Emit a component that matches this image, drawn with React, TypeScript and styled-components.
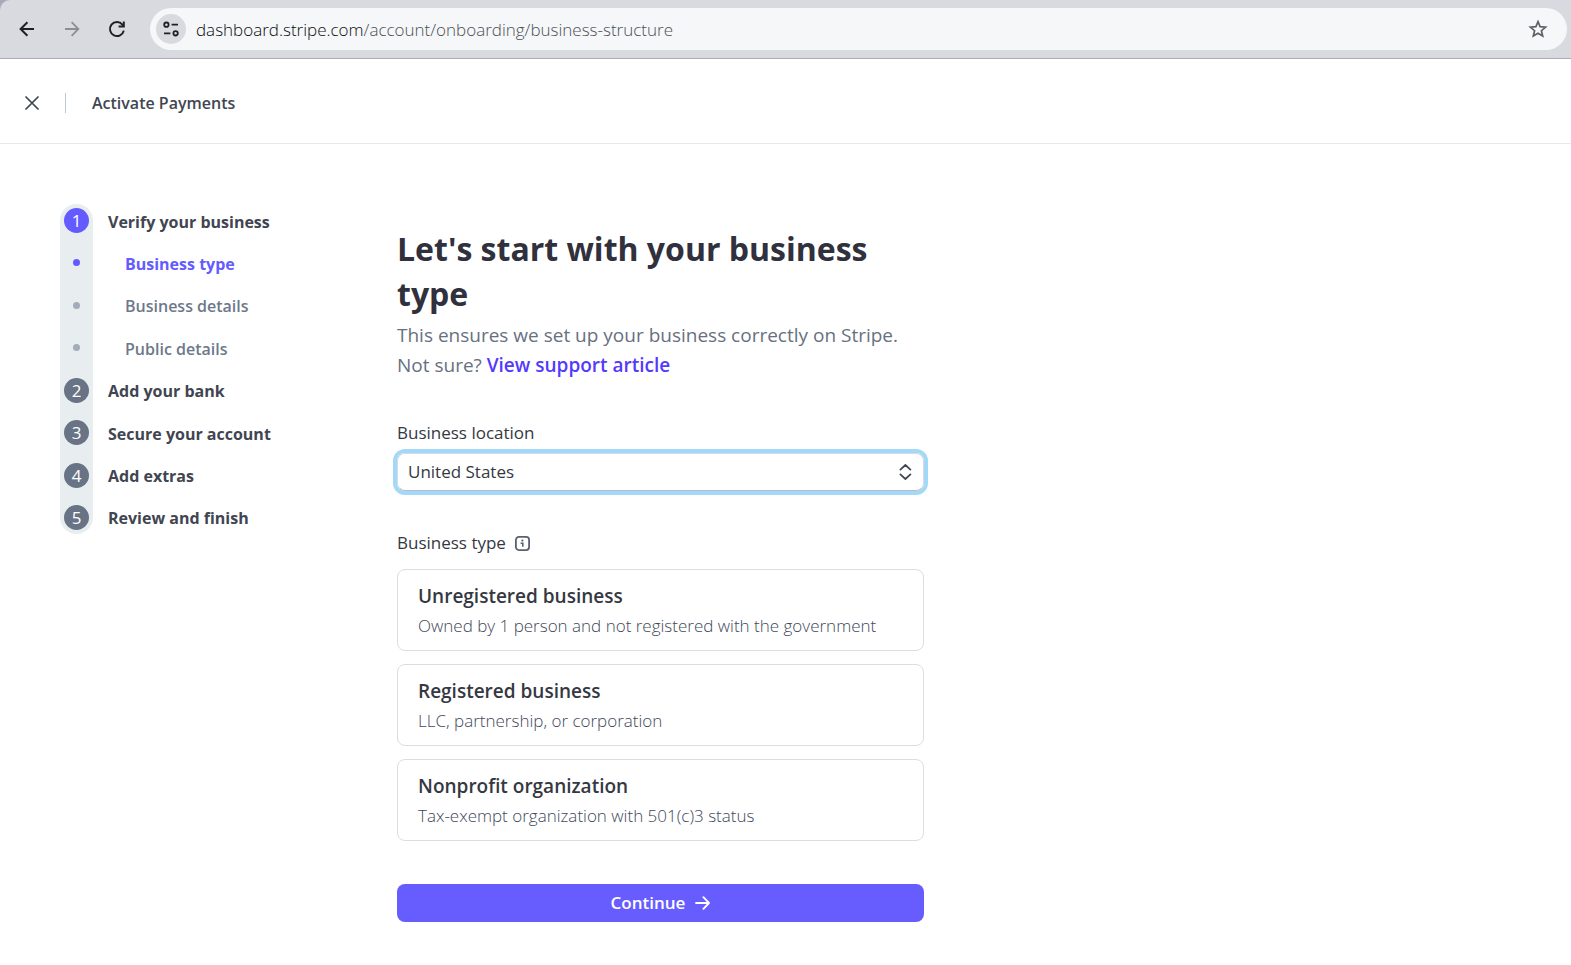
import React, { useState } from "react";
import styled, { createGlobalStyle } from "styled-components";

const GlobalStyle = createGlobalStyle`
  *, *::before, *::after { box-sizing: border-box; }
  body {
    margin: 0;
    background: #ffffff;
    color: #30313d;
    font-family: "Segoe UI", "Open Sans", "Noto Sans", sans-serif;
    font-size: 17px;
    line-height: 24px;
  }
  button, input, select { font: inherit; color: inherit; }
  h1, p, ol { margin: 0; padding: 0; }
  svg { display: block; }
`;

/* Browser chrome */

const ChromeBackdrop = styled.div`
  background: #a9a9bd;
`;

const BrowserBar = styled.div`
  display: flex;
  align-items: center;
  gap: 21px;
  height: 59px;
  padding: 0 4px 0 15px;
  background: #d9dadf;
  border-bottom: 1px solid #aaacb2;
  border-top-left-radius: 10px;
`;

const ChromeButton = styled.button<{ $muted?: boolean }>`
  display: grid;
  place-items: center;
  flex: none;
  width: 24px;
  height: 24px;
  padding: 0;
  border: 0;
  background: none;
  color: ${(p) => (p.$muted ? "#8d8e93" : "#1f2023")};
`;

const AddressBar = styled.div`
  flex: 1;
  min-width: 0;
  display: flex;
  align-items: center;
  gap: 10px;
  height: 42px;
  padding: 0 17px 0 6px;
  border-radius: 21px;
  background: #f5f7f9;
`;

const SiteInfoButton = styled.button`
  display: grid;
  place-items: center;
  flex: none;
  width: 30px;
  height: 30px;
  padding: 0;
  border: 0;
  border-radius: 50%;
  background: #d9dadf;
  color: #1f2023;
`;

const AddressText = styled.span`
  flex: 1;
  min-width: 0;
  padding-top: 1px;
  overflow: hidden;
  white-space: nowrap;
  font-weight: 300;
  color: #4c4f55;
`;

const AddressHost = styled.span`
  color: #0b0c0e;
`;

/* Page header */

const PageHeader = styled.header`
  display: flex;
  align-items: center;
  height: 85px;
  padding: 3px 20px 0;
  border-bottom: 1px solid #e6eaea;
`;

const CloseButton = styled.button`
  display: grid;
  place-items: center;
  width: 24px;
  height: 24px;
  padding: 0;
  border: 0;
  background: none;
  color: #414552;
`;

const Divider = styled.span`
  width: 1px;
  height: 20px;
  margin: 0 26px 0 21px;
  background: #c0c8d2;
`;

const PageTitle = styled.span`
  font-size: 16px;
  font-weight: 600;
  color: #414552;
`;

/* Steps */

const Layout = styled.div`
  display: flex;
  align-items: flex-start;
  padding: 60px 60px 40px;
`;

const StepNav = styled.nav`
  flex: none;
  width: 337px;
`;

const StepList = styled.ol`
  position: relative;
  display: flex;
  flex-direction: column;
  justify-content: space-between;
  min-height: 330px;
  padding: 4px 0;
  list-style: none;

  &::before {
    content: "";
    position: absolute;
    inset: 0 auto 0 0;
    z-index: -1;
    width: 33px;
    border-radius: 17px;
    background: #e8edf0;
  }
`;

const StepRow = styled.li`
  display: flex;
  align-items: center;
  height: 25px;
`;

const Marker = styled.span`
  display: grid;
  place-items: center;
  flex: none;
  width: 33px;
`;

const StepNumber = styled.span<{ $active?: boolean }>`
  width: 25px;
  height: 25px;
  border-radius: 50%;
  background: ${(p) => (p.$active ? "#635bff" : "#687385")};
  color: #ffffff;
  line-height: 26px;
  text-align: center;
`;

const StepDot = styled.span<{ $active?: boolean }>`
  width: 7px;
  height: 7px;
  border-radius: 50%;
  background: ${(p) => (p.$active ? "#635bff" : "#a3acba")};
`;

const StepLink = styled.a<{ $sub?: boolean; $active?: boolean }>`
  margin-left: ${(p) => (p.$sub ? 32 : 15)}px;
  padding-top: 2px;
  font-size: 16px;
  font-weight: ${(p) => (p.$sub && !p.$active ? 600 : 700)};
  color: ${(p) => (p.$active ? "#635bff" : p.$sub ? "#6d788a" : "#414552")};
  text-decoration: none;
`;

/* Form */

const Form = styled.form`
  flex: 0 1 527px;
  min-width: 0;
  padding-top: 22px;
`;

const Heading = styled.h1`
  font-size: 32px;
  line-height: 45px;
  font-weight: 700;
  color: #30313d;
`;

const Intro = styled.p`
  margin-top: 4px;
  font-size: 19px;
  line-height: 30px;
  color: #687080;
`;

const SupportLink = styled.a`
  font-weight: 600;
  color: #533afd;
  text-decoration: none;
`;

const FieldLabel = styled.label`
  display: block;
  margin-top: 41px;
  font-weight: 500;
  color: #353842;
`;

const SelectBox = styled.div`
  display: grid;
  align-items: center;
  margin-top: 8px;
  border-radius: 8px;
  box-shadow: 0 0 0 4px #a2d8f8;

  > * { grid-area: 1 / 1; }
  > svg { justify-self: end; margin-right: 12px; pointer-events: none; color: #414552; }
`;

const Select = styled.select`
  width: 100%;
  height: 38px;
  padding: 0 40px 0 10px;
  border: 1px solid #d5dbe1;
  border-bottom-color: #b9bcc4;
  border-radius: 8px;
  background: #ffffff;
  appearance: none;
  outline: none;
  font-weight: 500;
  color: #353842;
`;

const GroupLabel = styled.div`
  display: flex;
  align-items: center;
  gap: 9px;
  margin-top: 40px;
  font-weight: 500;
  color: #353842;
`;

const InfoButton = styled.button`
  padding: 0;
  border: 0;
  background: none;
  color: #596171;
`;

const Options = styled.div`
  display: grid;
  gap: 13px;
  margin-top: 14px;
`;

const OptionCard = styled.label`
  position: relative;
  display: flex;
  flex-direction: column;
  gap: 4px;
  padding: 12px 20px;
  border: 1px solid #d8dee4;
  border-radius: 8px;

  &:has(input:checked) { border-color: #675dff; }
`;

const OptionRadio = styled.input`
  position: absolute;
  inset: 0;
  margin: 0;
  appearance: none;
  border-radius: 8px;
`;

const OptionTitle = styled.span`
  font-size: 19px;
  line-height: 28px;
  font-weight: 600;
  color: #353842;
`;

const OptionText = styled.span`
  font-weight: 300;
  color: #414859;
`;

const ContinueButton = styled.button`
  display: flex;
  align-items: center;
  justify-content: center;
  gap: 10px;
  width: 100%;
  height: 38px;
  margin-top: 43px;
  padding: 0;
  border: 0;
  border-radius: 8px;
  background: #675dff;
  color: #ffffff;
  font-weight: 600;
`;

const BackIcon = () => (
  <svg width="16" height="16" viewBox="0 0 16 16" fill="none" stroke="currentColor" strokeWidth="2">
    <path d="M15 8H2M8.4 1.2 1.6 8l6.8 6.8" />
  </svg>
);

const ForwardIcon = () => (
  <svg width="16" height="16" viewBox="0 0 16 16" fill="none" stroke="currentColor" strokeWidth="1.8">
    <path d="M1 8h13M7.6 1.2 14.4 8l-6.8 6.8" />
  </svg>
);

const ReloadIcon = () => (
  <svg width="18" height="18" viewBox="0 0 18 18" fill="none" stroke="currentColor" strokeWidth="2">
    <path d="M15.8 10.6A7 7 0 1 1 14.4 4.6L15.6 6" />
    <path d="M15.8 1.4V6.6H10.6" />
  </svg>
);

const TuneIcon = () => (
  <svg width="16" height="16" viewBox="0 0 16 16" fill="none" stroke="currentColor" strokeWidth="1.8">
    <circle cx="3.4" cy="3.7" r="2.2" />
    <path d="M8.6 3.7H15M1 12.3h6.4" />
    <circle cx="12.6" cy="12.3" r="2.2" />
  </svg>
);

const StarIcon = () => (
  <svg width="20" height="20" viewBox="0 0 20 20" fill="none" stroke="#5e6065" strokeWidth="1.7">
    <path d="m10 2.6 2.1 5 5.5.5-4.2 3.6 1.3 5.3-4.7-2.8L5.3 17l1.3-5.3L2.4 8.1l5.5-.5z" />
  </svg>
);

const CloseIcon = () => (
  <svg width="14" height="14" viewBox="0 0 14 14" fill="none" stroke="currentColor" strokeWidth="1.7" strokeLinecap="round">
    <path d="m1 1 12 12M13 1 1 13" />
  </svg>
);

const ChevronsIcon = () => (
  <svg width="14" height="16" viewBox="0 0 14 16" fill="none" stroke="currentColor" strokeWidth="1.7" strokeLinecap="round" strokeLinejoin="round">
    <path d="M2.4 5.6 7.4 1l5 4.6M2.4 10.4l5 4.6 5-4.6" />
  </svg>
);

const InfoIcon = () => (
  <svg width="15" height="15" viewBox="0 0 15 15" fill="none" stroke="currentColor">
    <rect x="0.9" y="0.9" width="13.2" height="13.2" rx="3" strokeWidth="1.8" />
    <path d="M5.6 7.2h2.2v3.6" strokeWidth="1.6" />
    <circle cx="7.4" cy="4.6" r="1.1" fill="currentColor" stroke="none" />
  </svg>
);

const ArrowIcon = () => (
  <svg width="15" height="14" viewBox="0 0 15 14" fill="none" stroke="currentColor" strokeWidth="1.8" strokeLinecap="round" strokeLinejoin="round">
    <path d="M1 7h13M8.4 1.2 14 7l-5.6 5.8" />
  </svg>
);

type Step = { label: string; number?: number; active?: boolean };

const steps: Step[] = [
  { label: "Verify your business", number: 1 },
  { label: "Business type", active: true },
  { label: "Business details" },
  { label: "Public details" },
  { label: "Add your bank", number: 2 },
  { label: "Secure your account", number: 3 },
  { label: "Add extras", number: 4 },
  { label: "Review and finish", number: 5 },
];

const businessTypes = [
  { title: "Unregistered business", text: "Owned by 1 person and not registered with the government" },
  { title: "Registered business", text: "LLC, partnership, or corporation" },
  { title: "Nonprofit organization", text: "Tax-exempt organization with 501(c)3 status" },
];

export default function App() {
  const [type, setType] = useState("");

  return (
    <>
      <GlobalStyle />
      <ChromeBackdrop>
        <BrowserBar>
          <ChromeButton aria-label="Back"><BackIcon /></ChromeButton>
          <ChromeButton aria-label="Forward" $muted><ForwardIcon /></ChromeButton>
          <ChromeButton aria-label="Reload"><ReloadIcon /></ChromeButton>
          <AddressBar>
            <SiteInfoButton aria-label="Site information"><TuneIcon /></SiteInfoButton>
            <AddressText>
              <AddressHost>dashboard.stripe.com</AddressHost>/account/onboarding/business-structure
            </AddressText>
            <ChromeButton aria-label="Bookmark"><StarIcon /></ChromeButton>
          </AddressBar>
        </BrowserBar>
      </ChromeBackdrop>

      <PageHeader>
        <CloseButton aria-label="Close"><CloseIcon /></CloseButton>
        <Divider />
        <PageTitle>Activate Payments</PageTitle>
      </PageHeader>

      <Layout>
        <StepNav aria-label="Onboarding steps">
          <StepList>
            {steps.map((step) => (
              <StepRow key={step.label}>
                <Marker>
                  {step.number ? (
                    <StepNumber $active={step.number === 1}>{step.number}</StepNumber>
                  ) : (
                    <StepDot $active={step.active} />
                  )}
                </Marker>
                <StepLink href="#" $sub={!step.number} $active={step.active}>{step.label}</StepLink>
              </StepRow>
            ))}
          </StepList>
        </StepNav>

        <Form onSubmit={(e) => e.preventDefault()}>
          <Heading>Let's start with your business type</Heading>
          <Intro>
            This ensures we set up your business correctly on Stripe.
            <br />
            Not sure? <SupportLink href="#">View support article</SupportLink>
          </Intro>

          <FieldLabel htmlFor="location">Business location</FieldLabel>
          <SelectBox>
            <Select id="location" defaultValue="US">
              <option value="US">United States</option>
            </Select>
            <ChevronsIcon />
          </SelectBox>

          <GroupLabel>
            <span id="type-label">Business type</span>
            <InfoButton type="button" aria-label="About business types"><InfoIcon /></InfoButton>
          </GroupLabel>
          <Options role="radiogroup" aria-labelledby="type-label">
            {businessTypes.map((option) => (
              <OptionCard key={option.title}>
                <OptionRadio
                  type="radio"
                  name="business-type"
                  checked={type === option.title}
                  onChange={() => setType(option.title)}
                />
                <OptionTitle>{option.title}</OptionTitle>
                <OptionText>{option.text}</OptionText>
              </OptionCard>
            ))}
          </Options>

          <ContinueButton type="submit">
            Continue
            <ArrowIcon />
          </ContinueButton>
        </Form>
      </Layout>
    </>
  );
}
